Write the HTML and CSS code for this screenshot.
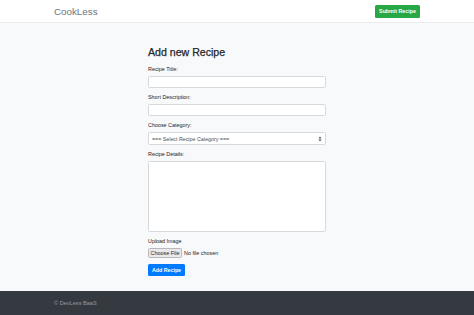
FILE: index.html
```html
<!DOCTYPE html>
<html>
<head>
<meta charset="utf-8">
<link rel="stylesheet" href="styles.css">
</head>
<body>
<nav class="navbar">
  <span class="brand">CookLess</span>
  <span class="btn btn-green">Submit Recipe</span>
</nav>
<main class="main">
  <form class="form">
    <h1 class="title">Add new Recipe</h1>
    <div class="group">
      <div class="label">Recipe Title:</div>
      <div class="input"></div>
    </div>
    <div class="group">
      <div class="label">Short Description:</div>
      <div class="input"></div>
    </div>
    <div class="group">
      <div class="label">Choose Category:</div>
      <div class="select">
        <span>=== Select Recipe Category ===</span>
        <svg class="arrows" width="4" height="6" viewBox="0 0 4 6"><path d="M0.5 2.4 L2 0.6 L3.5 2.4 Z M0.5 3.6 L2 5.4 L3.5 3.6 Z" fill="#555"/></svg>
      </div>
    </div>
    <div class="group">
      <div class="label">Recipe Details:</div>
      <div class="textarea"></div>
    </div>
    <div class="group last">
      <div class="label">Upload Image</div>
      <div class="file"><span class="file-btn">Choose File</span><span class="file-text">No file chosen</span></div>
    </div>
    <div class="btn btn-blue">Add Recipe</div>
  </form>
</main>
<footer class="footer">
  <span>© DevLess BaaS</span>
</footer>
</body>
</html>
```
FILE: styles.css
```css
* { box-sizing: border-box; }
html, body { margin: 0; padding: 0; }
body {
  font-family: "Liberation Sans", Arial, sans-serif;
  color: #212529;
  background: #f8f9fa;
  width: 474px;
  height: 315px;
  overflow: hidden;
}
.navbar {
  height: 23px;
  background: #fff;
  display: flex;
  align-items: center;
  justify-content: space-between;
  padding: 0 54px;
  border-bottom: 1px solid #ececec;
}
.brand {
  font-size: 9.8px;
  color: #6c757d;
}
.btn {
  display: flex;
  align-items: center;
  justify-content: center;
  color: #fff;
  font-size: 5.3px;
  font-weight: bold;
  border-radius: 1.5px;
}
.btn-green {
  background: #28a745;
  height: 13px;
  width: 45px;
}
.btn-blue {
  background: #007bff;
  height: 12px;
  width: 37px;
}
.main {
  height: 268px;
  padding-top: 23px;
}
.form {
  width: 178px;
  margin: 0 auto;
}
.title {
  font-size: 10.6px;
  font-weight: normal;
  -webkit-text-stroke: 0.25px #212529;
  line-height: 12px;
  margin: 0 0 8px 0;
  color: #212529;
}
.group { margin-bottom: 6px; }
.group.last { margin-bottom: 6px; }
.label {
  font-size: 5.4px;
  line-height: 7px;
  margin-bottom: 3px;
  color: #212529;
}
.input {
  height: 12px;
  background: #fff;
  border: 0.6px solid #d6d9dc;
  border-radius: 1.5px;
}
.select {
  height: 13px;
  background: #fff;
  border: 0.6px solid #d6d9dc;
  border-radius: 1.5px;
  display: flex;
  align-items: center;
  justify-content: space-between;
  padding: 0 3px 0 3px;
  font-size: 5.3px;
  color: #495057;
}
.arrows { display: block; }
.textarea {
  height: 71px;
  background: #fff;
  border: 0.6px solid #d6d9dc;
  border-radius: 1.5px;
}
.file {
  height: 10px;
  display: flex;
  align-items: center;
  font-size: 5.4px;
  color: #212529;
}
.file-btn {
  height: 10px;
  width: 34px;
  display: flex;
  align-items: center;
  justify-content: center;
  background: #e9e9ed;
  border: 0.6px solid #b9b9bd;
  border-radius: 1.5px;
  margin-right: 2px;
}
.footer {
  height: 24px;
  background: #343a40;
  display: flex;
  align-items: center;
  padding: 0 54px;
  font-size: 5.6px;
  color: #959ba1;
}
```
